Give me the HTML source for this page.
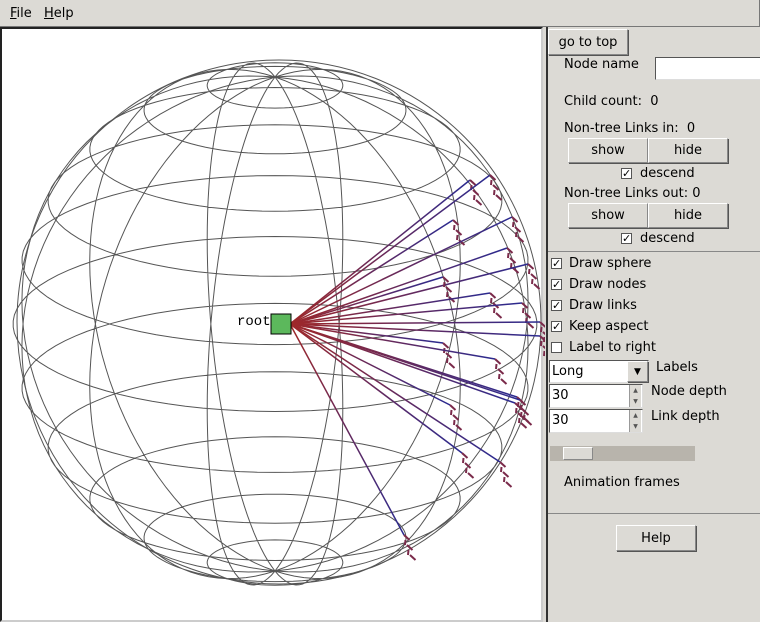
<!DOCTYPE html>
<html><head><meta charset="utf-8"><style>
*{margin:0;padding:0;box-sizing:border-box}
body{width:760px;height:622px;background:#dcdad5;font-family:"DejaVu Sans",sans-serif;font-size:13px;color:#000;position:relative;overflow:hidden}
.a{position:absolute;white-space:nowrap}
.btn{position:absolute;background:#dcdad5;border:1px solid #888;border-top-color:#fff;border-left-color:#fff;box-shadow:1px 1px 0 #555;text-align:center}
.cb{position:absolute;width:11px;height:11px;background:#fff;border:1px solid #555;font-size:11px;line-height:9px;text-align:center}
.ent{position:absolute;background:#fff;border:1px solid #555;border-right-color:#ddd;border-bottom-color:#ddd}
</style></head><body>
<div class="a" style="left:0;top:0;width:760px;height:27px;border-bottom:1px solid #777;border-right:1px solid #777"></div>
<div class="a" style="left:10px;top:6px"><u>F</u>ile</div>
<div class="a" style="left:44px;top:6px"><u>H</u>elp</div>
<div class="a" style="left:0;top:27px;width:543px;height:595px;background:#fff;border:2px solid #222;border-right-color:#ccc;border-bottom-color:#ccc"></div>
<svg class="a" style="left:0;top:0" width="545" height="622" id="sv">
<g id="wire" fill="none" stroke="#555" stroke-width="1"></g>
<g id="links" stroke-width="1.5"></g>
<rect x="271" y="314" width="20" height="20" fill="#5cb85c" stroke="#000"/>
<text x="237" y="325" font-family="Liberation Mono,monospace" font-size="14">root</text>
</svg>
<div class="a" style="left:546px;top:27px;width:2px;height:595px;background:#333"></div>
<div class="btn" style="left:548px;top:29px;width:80px;height:26px;line-height:25px">go to top</div>
<div class="a" style="left:564px;top:57px">Node name</div>
<div class="ent" style="left:655px;top:57px;width:110px;height:23px"></div>
<div class="a" style="left:564px;top:94px">Child count:&nbsp; 0</div>
<div class="a" style="left:564px;top:121px">Non-tree Links in:&nbsp; 0</div>
<div class="btn" style="left:568px;top:138px;width:80px;height:25px;line-height:24px">show</div>
<div class="btn" style="left:648px;top:138px;width:80px;height:25px;line-height:24px">hide</div>
<div class="cb" style="left:621px;top:168px">✓</div><div class="a" style="left:640px;top:166px">descend</div>
<div class="a" style="left:564px;top:186px">Non-tree Links out:&nbsp;0</div>
<div class="btn" style="left:568px;top:203px;width:80px;height:25px;line-height:24px">show</div>
<div class="btn" style="left:648px;top:203px;width:80px;height:25px;line-height:24px">hide</div>
<div class="cb" style="left:621px;top:233px">✓</div><div class="a" style="left:640px;top:231px">descend</div>
<div class="a" style="left:548px;top:251px;width:212px;height:1px;background:#888"></div>
<div class="cb" style="left:551px;top:258px">✓</div><div class="a" style="left:569px;top:256px">Draw sphere</div>
<div class="cb" style="left:551px;top:279px">✓</div><div class="a" style="left:569px;top:277px">Draw nodes</div>
<div class="cb" style="left:551px;top:300px">✓</div><div class="a" style="left:569px;top:298px">Draw links</div>
<div class="cb" style="left:551px;top:321px">✓</div><div class="a" style="left:569px;top:319px">Keep aspect</div>
<div class="cb" style="left:551px;top:342px"></div><div class="a" style="left:569px;top:340px">Label to right</div>
<div class="ent" style="left:549px;top:360px;width:100px;height:23px"></div>
<div class="a" style="left:552px;top:364px">Long</div>
<div class="btn" style="left:627px;top:361px;width:21px;height:21px;font-size:9px;line-height:20px">▼</div>
<div class="a" style="left:656px;top:360px">Labels</div>
<div class="ent" style="left:549px;top:384px;width:94px;height:24px"></div>
<div class="a" style="left:552px;top:388px">30</div>
<div class="a" style="left:629px;top:385px;width:12px;height:22px;background:#dcdad5;border-left:1px solid #999;font-size:6px;line-height:11px;text-align:center;color:#555">▲<br>▼</div>
<div class="a" style="left:651px;top:384px">Node depth</div>
<div class="ent" style="left:549px;top:409px;width:94px;height:24px"></div>
<div class="a" style="left:552px;top:413px">30</div>
<div class="a" style="left:629px;top:410px;width:12px;height:22px;background:#dcdad5;border-left:1px solid #999;font-size:6px;line-height:11px;text-align:center;color:#555">▲<br>▼</div>
<div class="a" style="left:651px;top:409px">Link depth</div>
<div class="a" style="left:550px;top:446px;width:145px;height:15px;background:#b8b4ac"></div>
<div class="btn" style="left:563px;top:447px;width:30px;height:13px;box-shadow:none"></div>
<div class="a" style="left:564px;top:475px">Animation frames</div>
<div class="a" style="left:548px;top:513px;width:212px;height:1px;background:#888"></div>
<div class="btn" style="left:616px;top:525px;width:80px;height:26px;line-height:25px">Help</div>
<script>
var NS="http://www.w3.org/2000/svg",cx=275,cy=324,r=262,t=19.5*Math.PI/180,d2r=Math.PI/180;
function P(lat,lon){lat*=d2r;lon*=d2r;var x=Math.cos(lat)*Math.sin(lon),y=Math.sin(lat),z=Math.cos(lat)*Math.cos(lon);
return [cx+r*x, cy-r*(y*Math.cos(t)+z*Math.sin(t))];}
var w=document.getElementById('wire'),s='';
function poly(pts){return 'M'+pts.map(function(p){return p[0].toFixed(1)+' '+p[1].toFixed(1)}).join('L');}
for(var la=-75;la<=75;la+=15){var pts=[];for(var lo=0;lo<=360;lo+=4)pts.push(P(la,lo));s+=poly(pts);}
for(var lo=15;lo<360;lo+=30){var pts=[];for(var la=-90;la<=90;la+=3)pts.push(P(la,lo));s+=poly(pts);}
var p=document.createElementNS(NS,'path');p.setAttribute('d',s);w.appendChild(p);
var c=document.createElementNS(NS,'circle');c.setAttribute('cx',cx+4);c.setAttribute('cy',cy-2);c.setAttribute('r',r);w.appendChild(c);
var ends=[[470,180],[490,175],[453,220],[512,217],[507,248],[528,264],[443,277],[490,293],[522,303],[540,322],[540,336],[443,343],[495,359],[517,397],[520,400],[515,403],[450,405],[462,453],[500,462],[404,535]];
var L=document.getElementById('links'),h='<defs>';
ends.forEach(function(e,i){h+='<linearGradient id="g'+i+'" gradientUnits="userSpaceOnUse" x1="290" y1="324" x2="'+e[0]+'" y2="'+e[1]+'"><stop offset="0" stop-color="#a02828"/><stop offset="1" stop-color="#2a2a90"/></linearGradient>';});
h+='</defs>';
ends.forEach(function(e,i){h+='<line x1="290" y1="324" x2="'+e[0]+'" y2="'+e[1]+'" stroke="url(#g'+i+')"/>';
var q='M'+e[0]+' '+e[1];for(var k=1;k<6;k++){q+='L'+(e[0]+(k%2?4:-2)+k*1.5)+' '+(e[1]+k*5)+'M'+(e[0]+k*1.5)+' '+(e[1]+k*5);}
h+='<path d="'+q+'" stroke="#7a2a4a" stroke-width="2" fill="none"/>';});
L.innerHTML=h;
</script>
</body></html>
